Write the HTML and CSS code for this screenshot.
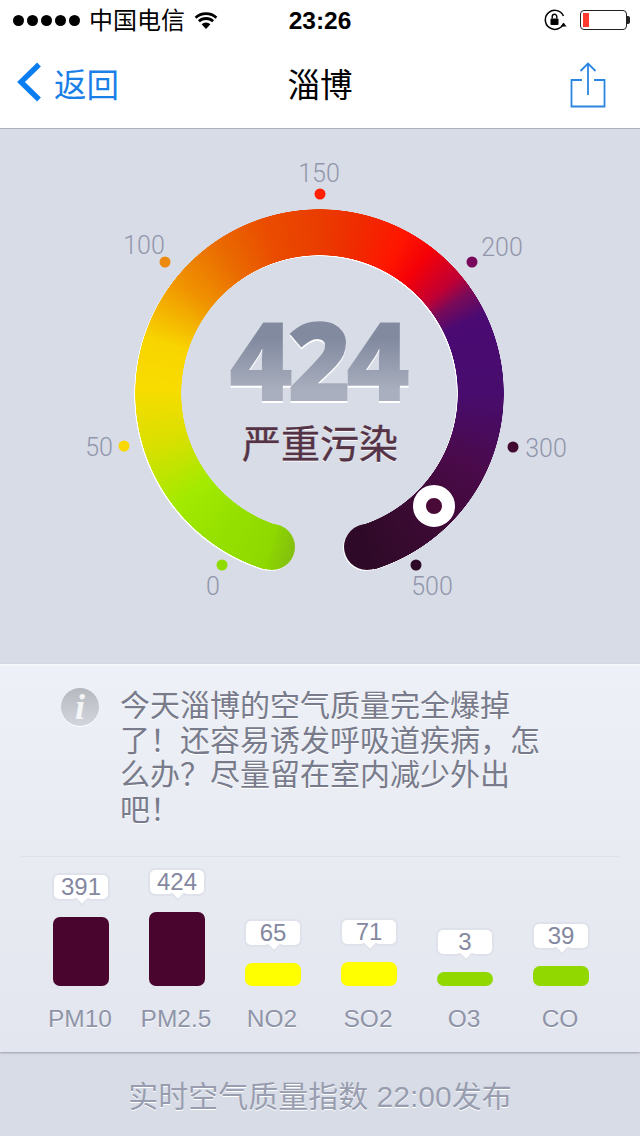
FILE: index.html
```html
<!DOCTYPE html>
<html lang="zh">
<head>
<meta charset="utf-8">
<title>淄博</title>
<link rel="stylesheet" href="styles.css">
</head>
<body>
<div class="page">
  <div class="status">
    <div class="status-left">
      <div class="dots"><i></i><i></i><i></i><i></i><i></i></div>
      <span class="carrier">中国电信</span>
      <svg class="wifi" width="26" height="20" viewBox="0 0 26 20"><path d="M13 19 8.6 14.2a6.4 6.4 0 0 1 8.8 0Z" fill="#000"/><path d="M5.9 11.3a10.4 10.4 0 0 1 14.2 0M2.6 7.7a15.2 15.2 0 0 1 20.8 0" fill="none" stroke="#000" stroke-width="2.8"/></svg>
    </div>
    <div class="time">23:26</div>
    <div class="status-right">
      <svg class="lock" width="24" height="22" viewBox="0 0 24 22"><path d="M19.6 14.5A9.5 9.5 0 1 1 19.5 7" fill="none" stroke="#000" stroke-width="1.5"/><path d="M16.6 6.6h6l-3 3.6Z" fill="#000" transform="rotate(180 19.6 12)"/><rect x="6.5" y="9.5" width="8" height="6.5" rx="1" fill="#000"/><path d="M8.2 9.5V7.6a2.3 2.3 0 0 1 4.6 0v1.9" fill="none" stroke="#000" stroke-width="1.4"/></svg>
      <div class="battery"><div class="battery-level"></div></div>
    </div>
  </div>
  <div class="nav">
    <div class="back">
      <svg width="26" height="40" viewBox="0 0 26 40"><path d="M23 2.5 5 20l18 17.5" fill="none" stroke="#0a7df0" stroke-width="5.4"/></svg>
      <span>返回</span>
    </div>
    <div class="title">淄博</div>
    <svg class="share" width="36" height="46" viewBox="0 0 36 46"><path d="M12 18H1.5v26.500h33V18H24" fill="none" stroke="#2a86e0" stroke-width="1.800"/><path d="M18 33V2M10.500 9 18 1.500 25.500 9" fill="none" stroke="#2a86e0" stroke-width="1.800"/></svg>
  </div>
  <div class="gauge">
    <div class="dial">
      <div class="ring">
        <div class="cap cap-left"></div>
        <div class="cap cap-right"></div>
        <div class="band"></div>
      </div>
      <div class="marker"></div>
      <div class="reading">424</div>
      <div class="level">严重污染</div>

      <span class="tick t0"></span><span class="tick t50"></span><span class="tick t100"></span><span class="tick t150"></span><span class="tick t200"></span><span class="tick t300"></span><span class="tick t500"></span>
      <span class="scale s0">0</span><span class="scale s50">50</span><span class="scale s100">100</span><span class="scale s150">150</span><span class="scale s200">200</span><span class="scale s300">300</span><span class="scale s500">500</span>
    </div>
  </div>
  <div class="info">
    <div class="advice">
      <div class="info-icon"><span>i</span></div>
      <p class="advice-text">今天淄博的空气质量完全爆掉<br>了！还容易诱发呼吸道疾病，怎<br>么办？尽量留在室内减少外出<br>吧！</p>
    </div>
    <div class="bars">
      <div class="col"><div class="bubble">391</div><div class="bar purple h69"></div><div class="name">PM10</div></div>
      <div class="col"><div class="bubble">424</div><div class="bar purple h74"></div><div class="name">PM2.5</div></div>
      <div class="col"><div class="bubble">65</div><div class="bar yellow h23"></div><div class="name">NO2</div></div>
      <div class="col"><div class="bubble">71</div><div class="bar yellow h24"></div><div class="name">SO2</div></div>
      <div class="col"><div class="bubble">3</div><div class="bar green h14"></div><div class="name">O3</div></div>
      <div class="col"><div class="bubble">39</div><div class="bar green h20"></div><div class="name">CO</div></div>
    </div>
  </div>
  <div class="footer">实时空气质量指数 22:00发布</div>
</div>
</body>
</html>
```
FILE: styles.css
```css
* { box-sizing: border-box; }
html, body { margin: 0; padding: 0; }
body { font-family: "Liberation Sans", "Noto Sans CJK SC", sans-serif; background: #fff; }
.page { width: 640px; height: 1136px; display: flex; flex-direction: column; overflow: hidden; }

.status { height: 40px; flex: none; background: #fff; display: grid; grid-template-columns: 1fr auto 1fr; align-items: center; padding: 2px 13px 0; color: #000; font-size: 24px; }
.status-left { display: flex; align-items: center; }
.dots { display: flex; gap: 3px; margin-right: 9px; margin-top: -2px; }
.dots i { width: 11px; height: 11px; border-radius: 50%; background: #000; display: block; }
.carrier { line-height: 30px; }
.wifi { margin-left: 8px; margin-top: -2px; }
.time { font-weight: bold; font-size: 24.500px; }
.status-right { display: flex; align-items: center; justify-content: flex-end; gap: 13px; margin-top: -2px; }
.lock { margin-right: -1px; }
.battery { width: 47px; height: 20px; border: 1px solid #222; border-radius: 4px; padding: 2px; position: relative; }
.battery::after { content: ""; position: absolute; right: -4px; top: 5px; width: 3px; height: 8px; background: #222; border-radius: 0 2px 2px 0; }
.battery-level { width: 6px; height: 100%; background: #ff3b30; }

.nav { height: 89px; flex: none; background: #fff; border-bottom: 1px solid #a9b1bd; display: grid; grid-template-columns: 1fr auto 1fr; align-items: center; padding: 0 16px 4px; }
.back { display: flex; align-items: center; gap: 12px; color: #1a80e8; font-size: 32.500px; }
.back span { margin-top: 1px; }
.title { font-size: 32.500px; color: #000; }
.share { justify-self: end; margin-right: 18px; margin-top: 5px; }

.gauge { height: 535px; flex: none; background: #d8dce6; }
.dial { position: relative; width: 640px; height: 535px; }
.ring { position: absolute; left: 135px; top: 80px; width: 369px; height: 369px; filter: drop-shadow(-1px 1px 0 #fff); }
.band { position: relative; width: 100%; height: 100%; background: conic-gradient(#ea3c00 0deg, #f02a00 14deg, #ff1600 28deg, #f40008 38deg, #c00034 50deg, #7a0a58 56deg, #4a0a72 64deg, #480c6e 90deg, #4a0a4a 116deg, #3c0a34 140deg, #2f0a28 163deg, #8ed800 197deg, #96e000 215deg, #a2ea00 232deg, #d8e000 252deg, #f8dc00 272deg, #f8d400 288deg, #f09400 308deg, #ea6c00 325deg, #ea4c00 342deg, #ea3c00 360deg);
  -webkit-mask-image: radial-gradient(closest-side, transparent 138px, #000 138.500px, #000 184px, transparent 184.500px), conic-gradient(#000 162.700deg, transparent 162.700deg, transparent 197.300deg, #000 197.300deg);
  mask-image: radial-gradient(closest-side, transparent 138px, #000 138.500px, #000 184px, transparent 184.500px), conic-gradient(#000 162.700deg, transparent 162.700deg, transparent 197.300deg, #000 197.300deg);
  -webkit-mask-composite: source-in; mask-composite: intersect; }
.cap { position: absolute; width: 46px; height: 46px; border-radius: 50%; top: 315.200px; }
.cap-left { left: 113.600px; background: linear-gradient(105deg, #8ed800 45%, #82bc10 95%); }
.cap-right { left: 209.400px; background: #2f0a28; }
.marker { position: absolute; left: 413px; top: 356px; width: 42px; height: 42px; border-radius: 50%; border: 13px solid #fff; background: #4a0a38; }

.reading { position: absolute; left: 0; width: 640px; top: 179px; padding-right: 7px; text-align: center; font-family: "Open Sans", sans-serif; font-weight: 800; font-size: 110px; line-height: 100px; letter-spacing: -6px; background: linear-gradient(#828aa0 31%, #a9afbe 83%); -webkit-background-clip: text; background-clip: text; color: transparent; filter: drop-shadow(0 2px 0 #fff); }
.level { position: absolute; left: 0; width: 640px; top: 288px; text-align: center; font-size: 39px; line-height: 56px; color: #553346; -webkit-text-stroke: 0.4px #553346; text-shadow: 0 1px 0 #fff; }

.tick { position: absolute; width: 11px; height: 11px; border-radius: 50%; transform: translate(-50%, -50%); }
.t0 { left: 222px; top: 436px; background: #90dc00; }
.t50 { left: 124px; top: 317px; background: #f8d800; }
.t100 { left: 165px; top: 133px; background: #ec8a10; }
.t150 { left: 320px; top: 65px; background: #ff2000; }
.t200 { left: 472px; top: 133px; background: #78085c; }
.t300 { left: 513px; top: 318px; background: #420a30; }
.t500 { left: 416px; top: 436px; background: #2f0a28; }
.scale { position: absolute; font-family: Roboto, sans-serif; font-weight: 300; font-size: 25px; line-height: 30px; color: #9196ac; transform: translate(-50%, -50%); }
.s0 { left: 213px; top: 458px; }
.s50 { left: 99px; top: 319px; }
.s100 { left: 144px; top: 117px; }
.s150 { left: 319px; top: 45px; }
.s200 { left: 502px; top: 119px; }
.s300 { left: 546px; top: 320px; }
.s500 { left: 432px; top: 458px; }

.info { flex: none; height: 388px; display: flex; flex-direction: column; background: linear-gradient(#edf0f6, #e3e6ee); border-top: 2px solid #f6f8fb; box-shadow: 0 1px 2px rgba(90, 95, 110, .5); position: relative; }
.advice { height: 191px; flex: none; margin: 0 20px; padding: 23px 0 0 41px; display: flex; align-items: flex-start; gap: 21px; border-bottom: 1px solid #dfe2ea; }
.info-icon { width: 38px; height: 38px; flex: none; margin-top: -1px; border-radius: 50%; background: linear-gradient(#b6b8c0, #d4d6dd); box-shadow: 0 1px 0 #fff; display: flex; align-items: center; justify-content: center; }
.info-icon span { font-family: "Liberation Serif", serif; font-style: italic; font-weight: bold; font-size: 36px; line-height: 38px; color: #f4f5f7; }
.advice-text { margin: 0; font-size: 30px; line-height: 34.500px; color: #787b8b; text-shadow: 0 1px 0 #fff; }

.bars { flex: 1; display: flex; align-items: flex-end; padding: 0 31px 19px 33px; }
.col { width: 96px; flex: none; display: flex; flex-direction: column; align-items: center; }
.bubble { position: relative; width: 58px; height: 28px; margin-bottom: 16px; background: #fff; border: 2px solid #dfe2ea; border-radius: 7px; text-align: center; font-size: 24px; line-height: 24px; color: #8488a0; }
.bubble::after { content: ""; position: absolute; left: 50%; bottom: -5px; width: 10px; height: 10px; margin-left: -5px; background: #fff; border-right: 2px solid #dfe2ea; border-bottom: 2px solid #dfe2ea; transform: rotate(45deg); clip-path: polygon(100% 0, 100% 100%, 0 100%); }
.bar { width: 56px; border-radius: 7px; }
.purple { background: #4a052e; }
.yellow { background: #ffff00; }
.green { background: #90d800; }
.h69 { height: 69px; }
.h74 { height: 74px; }
.h23 { height: 23px; }
.h24 { height: 24px; }
.h14 { height: 14px; }
.h20 { height: 20px; }
.name { margin-top: 19px; margin-left: -2px; font-size: 24.500px; line-height: 28px; color: #8f94a8; text-shadow: 0 1px 0 #fff; white-space: nowrap; }

.footer { flex: 1; background: #d8dce6; display: flex; align-items: center; justify-content: center; font-size: 30px; color: #989db0; text-shadow: 0 1px 0 #fff; }
```
